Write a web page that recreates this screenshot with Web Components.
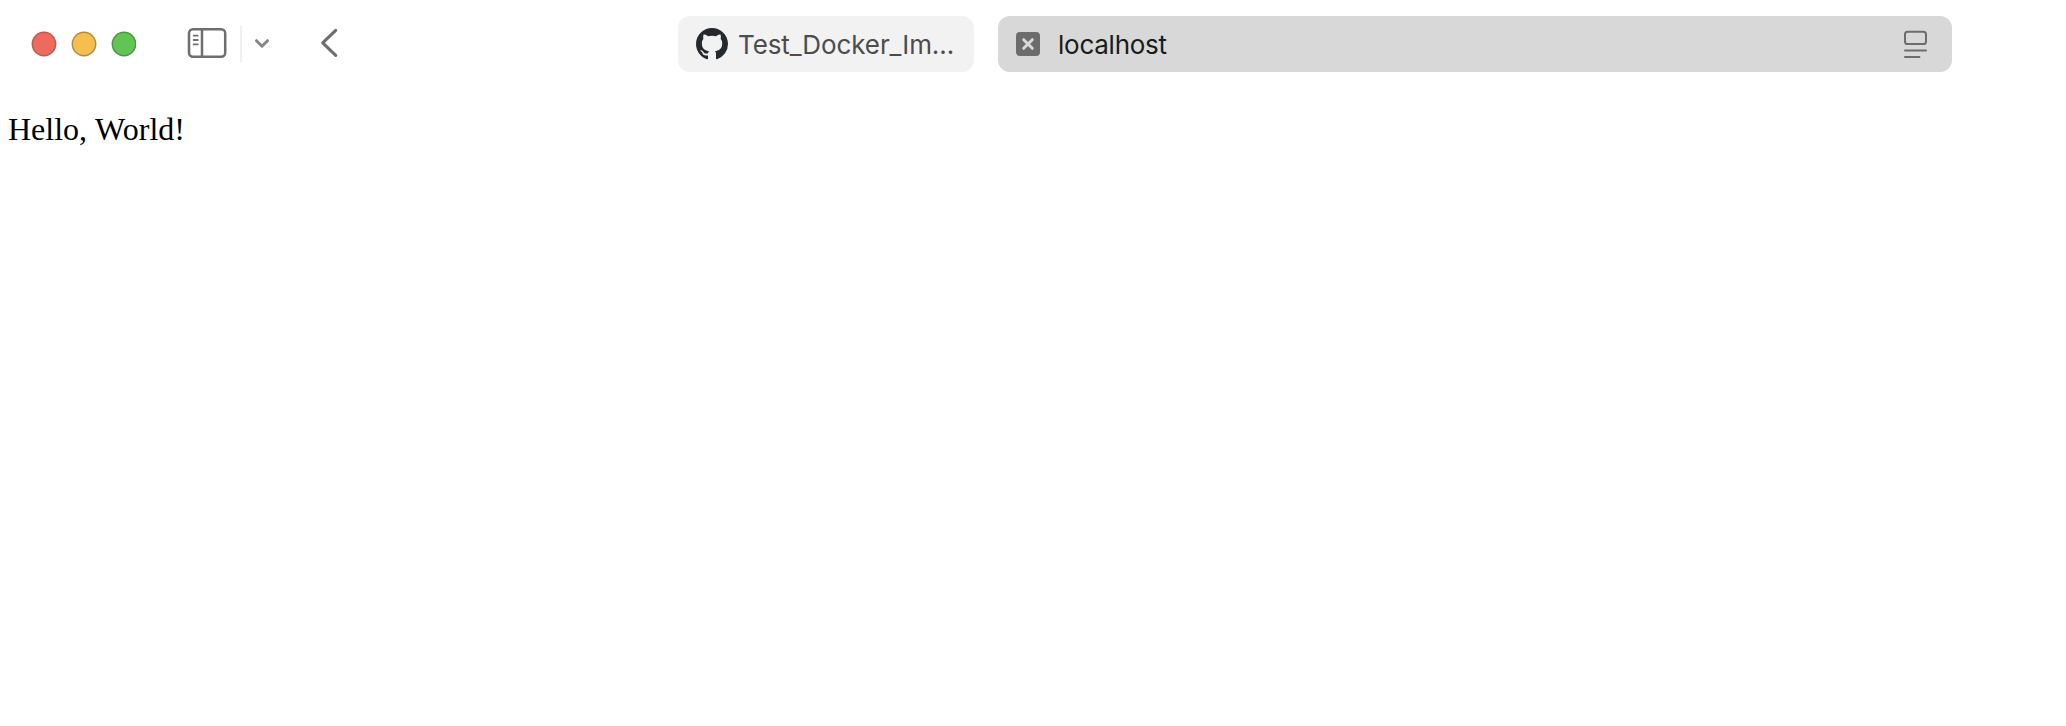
<!DOCTYPE html>
<html lang="en">
<head>
<meta charset="utf-8">
<title>localhost</title>
<style>
html, body { margin: 0; height: 100%; background: #fff; overflow: hidden; }
</style>
</head>
<body>
<browser-window>
  <browser-toolbar slot="toolbar">
    <window-controls></window-controls>
    <nav-controls></nav-controls>
    <browser-tab class="background">
      <svg slot="icon" width="32" height="32" viewBox="0 0 16 16" fill="#24292e"><path d="M8 0C3.58 0 0 3.58 0 8c0 3.54 2.29 6.53 5.47 7.59.4.07.55-.17.55-.38 0-.19-.01-.82-.01-1.49-2.01.37-2.53-.49-2.69-.94-.09-.23-.48-.94-.82-1.13-.28-.15-.68-.52-.01-.53.63-.01 1.08.58 1.23.82.72 1.21 1.87.87 2.33.66.07-.52.28-.87.51-1.07-1.78-.2-3.64-.89-3.64-3.95 0-.87.31-1.59.82-2.15-.08-.2-.36-1.02.08-2.12 0 0 .67-.21 2.2.82.64-.18 1.32-.27 2-.27s1.36.09 2 .27c1.53-1.04 2.2-.82 2.2-.82.44 1.1.16 1.92.08 2.12.51.56.82 1.27.82 2.15 0 3.07-1.87 3.75-3.65 3.95.29.25.54.73.54 1.48 0 1.07-.01 1.93-.01 2.2 0 .21.15.46.55.38A8.01 8.01 0 0 0 16 8c0-4.42-3.58-8-8-8z"/></svg>
      Test_Docker_Im…
    </browser-tab>
    <browser-tab class="active">
      <svg slot="icon" width="24" height="24" viewBox="0 0 24 24"><rect width="24" height="24" rx="4" fill="#6c6c6c"/><path d="M7.7 7.7l8.6 8.6M16.3 7.7l-8.6 8.6" stroke="#d8d8d8" stroke-width="3" stroke-linecap="round"/></svg>
      localhost
      <svg slot="action" width="24" height="28" viewBox="0 0 24 28" fill="none" stroke="#6c6c6c" stroke-width="2" stroke-linecap="round"><rect x="1" y="1.7" width="21" height="12.3" rx="2.6"/><path d="M1 20.6h21M1 27h14.4"/></svg>
    </browser-tab>
  </browser-toolbar>
  <page-content>Hello, World!</page-content>
</browser-window>
<script>
const define = (name, html) => customElements.define(name, class extends HTMLElement {
  constructor() {
    super();
    this.attachShadow({ mode: 'open' }).innerHTML = html;
  }
});

define('browser-window', `
<style>:host { display: flex; flex-direction: column; height: 100vh; background: #fff; }</style>
<slot name="toolbar"></slot><slot></slot>`);

define('browser-toolbar', `
<style>
:host { display: flex; height: 103px; box-sizing: border-box; padding: 16px 114px 0 31px; flex: none; }
::slotted(window-controls) { margin-right: 49px; }
::slotted(nav-controls) { margin-right: auto; }
::slotted(.background) { width: 296px; margin-right: 24px; background: #f2f2f2; color: #4c4c4c; --gap: 10px; --spacing: -0.1px; }
::slotted(.active) { width: 954px; background: #d8d8d8; color: #1a1a1a; --gap: 18px; --spacing: -0.25px; }
</style><slot></slot>`);

define('window-controls', `
<style>
:host { display: flex; align-items: center; height: 56px; }
svg { display: block; stroke-width: 1.4; }
</style>
<svg width="105" height="26" viewBox="0 0 105 26">
<circle cx="13" cy="13" r="11.7" fill="#ec6a5e" stroke="#bf5850"/>
<circle cx="53" cy="13" r="11.7" fill="#f5bf4f" stroke="#b08a42"/>
<circle cx="93" cy="13" r="11.7" fill="#61c554" stroke="#4d9443"/>
</svg>`);

define('nav-controls', `
<style>
:host { display: flex; align-items: center; height: 56px; }
svg { display: block; flex: none; fill: none; stroke-linecap: round; stroke-linejoin: round; }
.sidebar { margin: -2px 13px 0 2px; }
.line { width: 2px; height: 36px; background: #f0f0f0; }
.down { margin: 0 50px 0 12px; }
.back { margin-top: -2px; }
</style>
<svg class="sidebar" width="40" height="32" viewBox="0 0 40 32" stroke="#6e6e6e" stroke-width="2.5"><rect x="2" y="2.2" width="36.2" height="27.6" rx="4"/><path d="M15 2.5v27"/><path d="M6.7 8.6h4M6.7 13h4M6.7 17.4h4" stroke-width="1.9"/></svg>
<span class="line"></span>
<svg class="down" width="16" height="12" viewBox="0 0 16 12" stroke="#85858a" stroke-width="3"><path d="M2.5 2.7l5.5 5.5L13.5 2.7"/></svg>
<svg class="back" width="18" height="32" viewBox="0 0 18 32" stroke="#6e6e6e" stroke-width="3.1"><path d="M15.7 3.4L2.7 15.9l13 12.5"/></svg>`);

define('browser-tab', `
<style>
:host { display: flex; align-items: center; height: 56px; box-sizing: border-box; padding: 0 24px 0 18px; border-radius: 12px; flex: none; font: 26px/32px Inter, "Liberation Sans", sans-serif; }
.title { flex: 1; margin-left: var(--gap); padding-top: 2px; white-space: nowrap; letter-spacing: var(--spacing); }
::slotted(svg) { display: block; flex: none; overflow: visible; }
</style>
<slot name="icon"></slot><span class="title"><slot></slot></span><slot name="action"></slot>`);

define('page-content', `
<style>:host { display: block; flex: 1; padding: 8px; color: #000; font: 32px/37px "Liberation Serif", "Times New Roman", serif; word-spacing: 0.6px; }</style>
<slot></slot>`);
</script>
</body>
</html>
